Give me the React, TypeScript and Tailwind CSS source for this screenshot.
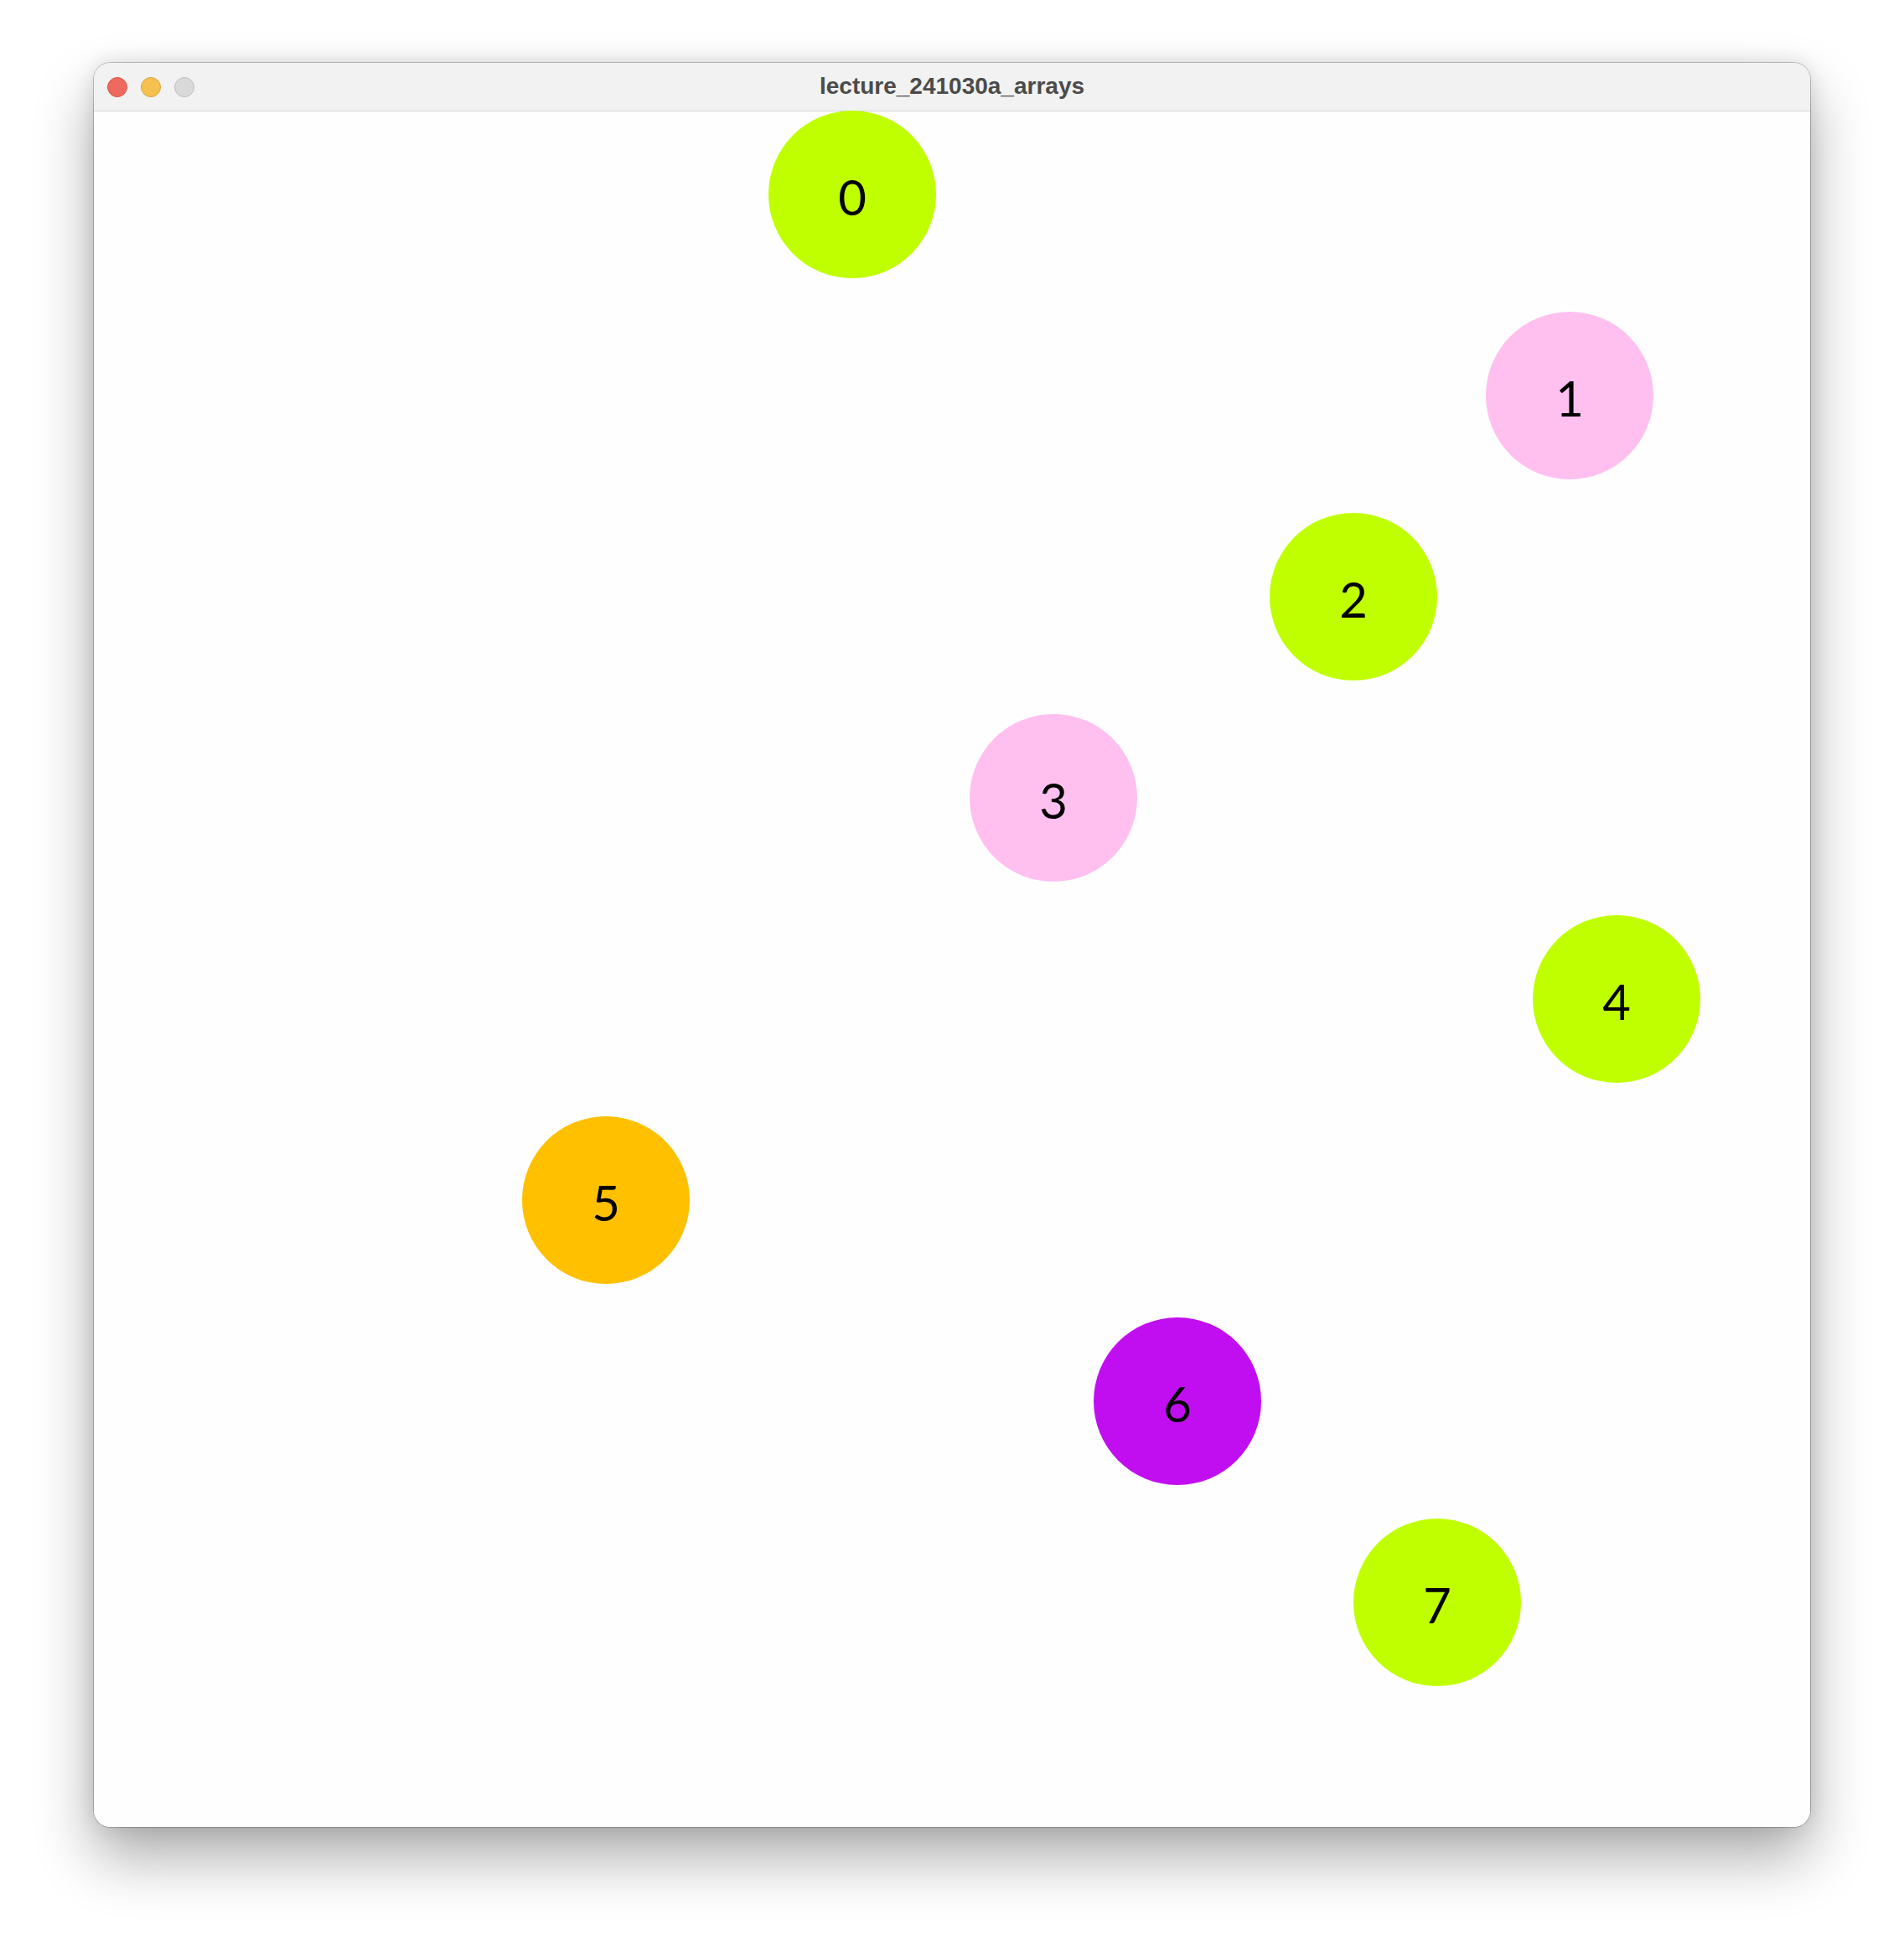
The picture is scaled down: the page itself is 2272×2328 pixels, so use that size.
import React from "react";

const circles = [
  { n: 0, x: 805, c: "#c0ff00" },
  { n: 1, x: 1661, c: "#ffc0f0" },
  { n: 2, x: 1403, c: "#c0ff00" },
  { n: 3, x: 1045, c: "#ffc0f0" },
  { n: 4, x: 1717, c: "#c0ff00" },
  { n: 5, x: 511, c: "#ffc000" },
  { n: 6, x: 1193, c: "#c00ef0" },
  { n: 7, x: 1503, c: "#c0ff00" },
];

export default function App() {
  return (
    <div className="w-[2272px] h-[2328px] bg-white pt-[75px] pl-[112px]">
      <div className="w-[2048px] rounded-[20px] overflow-hidden bg-[#fefefe] shadow-[0_0_0_1px_rgba(0,0,0,0.22),0_36px_70px_rgba(0,0,0,0.33),0_0_24px_rgba(0,0,0,0.12)]">
        <div className="relative h-[58px] bg-[#f1f2f1] border-b border-[#d6d6d6] flex items-center justify-center">
          <div className="absolute left-[16px] top-[17px] flex gap-[16px]">
            <div className="w-[24px] h-[24px] rounded-full bg-[#ee6a5f] border border-[#d6554b]" />
            <div className="w-[24px] h-[24px] rounded-full bg-[#f5c04f] border border-[#d9a23a]" />
            <div className="w-[24px] h-[24px] rounded-full bg-[#d8d9d8] border border-[#bdbdbd]" />
          </div>
          <span
            className="text-[28px] font-bold text-[#4b4b4b] leading-none -mt-[2px]"
            style={{ fontFamily: '"Liberation Sans", Arial, sans-serif' }}
          >
            lecture_241030a_arrays
          </span>
        </div>
        <div className="relative h-[2047px] bg-[#fefefe]">
          {circles.map((ci) => (
            <div
              key={ci.n}
              className="absolute w-[200px] h-[200px] rounded-full flex items-center justify-center"
              style={{ left: ci.x, top: ci.n * 240 - 1, backgroundColor: ci.c }}
            >
              <span
                className="text-[58px] text-black leading-none pt-[6px]"
                style={{ fontFamily: 'Lato, "Noto Sans", sans-serif' }}
              >
                {ci.n}
              </span>
            </div>
          ))}
        </div>
      </div>
    </div>
  );
}
